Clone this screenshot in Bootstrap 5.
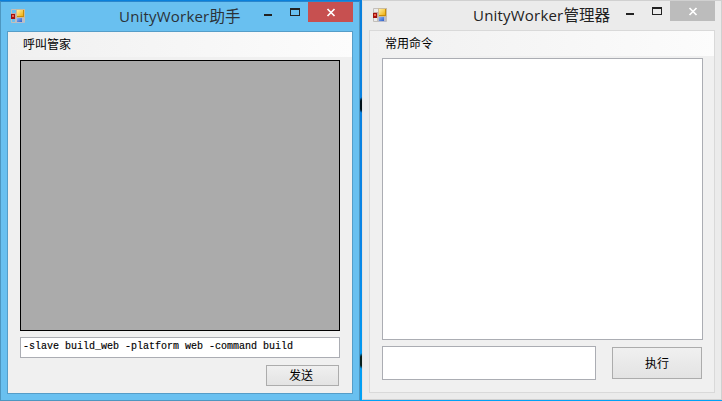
<!DOCTYPE html>
<html lang="zh-CN">
<head>
<meta charset="utf-8">
<title>UnityWorker</title>
<meta name="viewport" content="width=device-width, initial-scale=1">
<link href="https://cdn.jsdelivr.net/npm/bootstrap@5.3.0/dist/css/bootstrap.min.css" rel="stylesheet">
<style>
body{width:722px;height:401px;font-family:"Noto Sans","Noto Sans CJK SC",sans-serif;font-size:12px;line-height:1;color:#000;background:#0a84e2}
.desk{width:722px;height:401px;gap:2px;
 background:radial-gradient(ellipse 3px 8px at 361.5px 105px,#001018 60%,transparent),radial-gradient(ellipse 3px 8px at 361.5px 361px,#08201c 60%,transparent),linear-gradient(#0a80dc,#0a84e6 60%,#00a2f6)}
.win{width:360px}
.win-blue{margin-top:1px;height:400px;background:#69c0f0;border:1px solid #4d96c0;border-top-color:#2b86cc;padding:0 6px 6px}
.win-grey{height:400px;background:#ebebeb;border:1px solid #d0d0d0;border-left-color:#e4e4e4;padding:0 6px 6px}
.titlebar{height:29px;flex:none}
.app-icon{margin:7px 0 0 4px;flex:none}
.caption{color:#2b3238;font-family:"Open Sans","Noto Sans CJK SC",sans-serif;font-size:15px;line-height:20px;padding-top:4px;white-space:nowrap}
.caption .han{font-size:15.5px;letter-spacing:0}
.caption{letter-spacing:.2px}
.win-blue .caption{margin-left:94px}
.win-grey .caption{margin-left:86px;color:#222}
.ctl{margin-left:auto}
.close-btn{width:45px;height:20px;background:#c75050;flex:none}
.win-grey .close-btn{background:#bcbcbc}
.client{background:#f0f0f0;border:1px solid #559dc8;flex:1;min-height:0}
.win-grey .client{border-color:#d9d9d9}
.menu{height:25px;padding:6px 15px;background:linear-gradient(90deg,#f0f0f0,#fcfcfc);line-height:13px}
.content{padding:3px 12px 0}
.win-grey .content{padding:2px 11px 0 12px}
.grid-box{height:271px;background:#ababab;border:1px solid #000}
.list-area{height:282px;background:#fff;border:1px solid #abadb3}
.field{display:block;background:#fff;border:1px solid #abadb3;border-radius:0;padding:0 2px;color:#000}
.cmd{width:320px;height:21px;margin-top:6px;padding-bottom:2px;font:10px/17px "Liberation Mono",monospace;-webkit-text-stroke:.15px #000}
.entry-row{margin-top:6px}
.cmd2{width:214px;height:34px}
.push,.push:hover{border:1px solid #acacac;border-radius:0;background:linear-gradient(#f0f0f0,#e3e3e3);color:#000;font-size:12px;line-height:12px;padding:1px 0 0}
.send,.send:hover{width:73px;height:21px;margin:7px 1px 0 0;padding:1px 3px 0 0}
.exec{width:90px;height:32px;margin-right:1px}
</style>
<script src="https://cdn.jsdelivr.net/npm/bootstrap@5.3.0/dist/js/bootstrap.bundle.min.js"></script>
</head>
<body class="m-0 overflow-hidden">
<svg width="0" height="0" class="position-absolute" aria-hidden="true">
 <defs>
  <linearGradient id="gy" x2="1" y2="1"><stop stop-color="#fff0a0"/><stop offset="1" stop-color="#f0b010"/></linearGradient>
  <linearGradient id="gb" x2="1" y2="1"><stop stop-color="#8ab4f8"/><stop offset="1" stop-color="#2d5fc8"/></linearGradient>
  <symbol id="form" viewBox="0 0 14 14">
   <path d="M.5 4V.5H6M.5 10v3.500h13V8M4.500 10v3.500" fill="none" stroke="#c3bfba"/>
   <path d="M5 0h9v9H5z" fill="#c9bba0"/><path d="M0 4h5v6H0z" fill="#c4aaa6"/><path d="M5 9h8v5H5z" fill="#b9bccb"/>
   <path d="M6 1h7v7H6z" fill="#c98d08"/><path d="M6 1h6v6H6z" fill="url(#gy)"/>
   <path d="M0 5h4v5H0z" fill="#a3110d"/><path d="M1 6h2v2H1z" fill="#ee6550"/>
   <path d="M6 9h5v4H6z" fill="url(#gb)"/>
  </symbol>
  <symbol id="minmax" viewBox="0 0 44 20">
   <path d="M0 12h8v2H0z" fill="#222"/><path fill-rule="evenodd" d="M26 6h10v8H26zM27 8v5h8V8z" fill="#222"/>
  </symbol>
  <symbol id="cross" viewBox="0 0 45 20"><path d="M19.500 7l7 7M26.500 7l-7 7" stroke="#fff" stroke-width="1.700"/></symbol>
 </defs>
</svg>
<main class="desk d-flex align-items-start">
 <section class="win win-blue d-flex flex-column">
  <header class="titlebar d-flex align-items-start">
   <svg class="app-icon" width="14" height="14"><use href="#form"/></svg>
   <div class="caption">UnityWorker<span class="han">助手</span></div>
   <svg class="ctl" width="44" height="20"><use href="#minmax"/></svg>
   <div class="close-btn"><svg width="45" height="20" class="d-block"><use href="#cross"/></svg></div>
  </header>
  <div class="client">
   <nav class="menu">呼叫管家</nav>
   <div class="content">
    <div class="grid-box"></div>
    <input class="field cmd" value="-slave build_web -platform web -command build" aria-label="命令">
    <div class="d-flex justify-content-end"><button class="btn push send">发送</button></div>
   </div>
  </div>
 </section>
 <section class="win win-grey d-flex flex-column">
  <header class="titlebar d-flex align-items-start">
   <svg class="app-icon" width="14" height="14"><use href="#form"/></svg>
   <div class="caption">UnityWorker<span class="han">管理器</span></div>
   <svg class="ctl" width="44" height="20"><use href="#minmax"/></svg>
   <div class="close-btn"><svg width="45" height="20" class="d-block"><use href="#cross"/></svg></div>
  </header>
  <div class="client">
   <nav class="menu">常用命令</nav>
   <div class="content">
    <div class="list-area"></div>
    <div class="entry-row d-flex justify-content-between align-items-center"><input class="field cmd2" aria-label="参数"><button class="btn push exec">执行</button></div>
   </div>
  </div>
 </section>
</main>
</body>
</html>
